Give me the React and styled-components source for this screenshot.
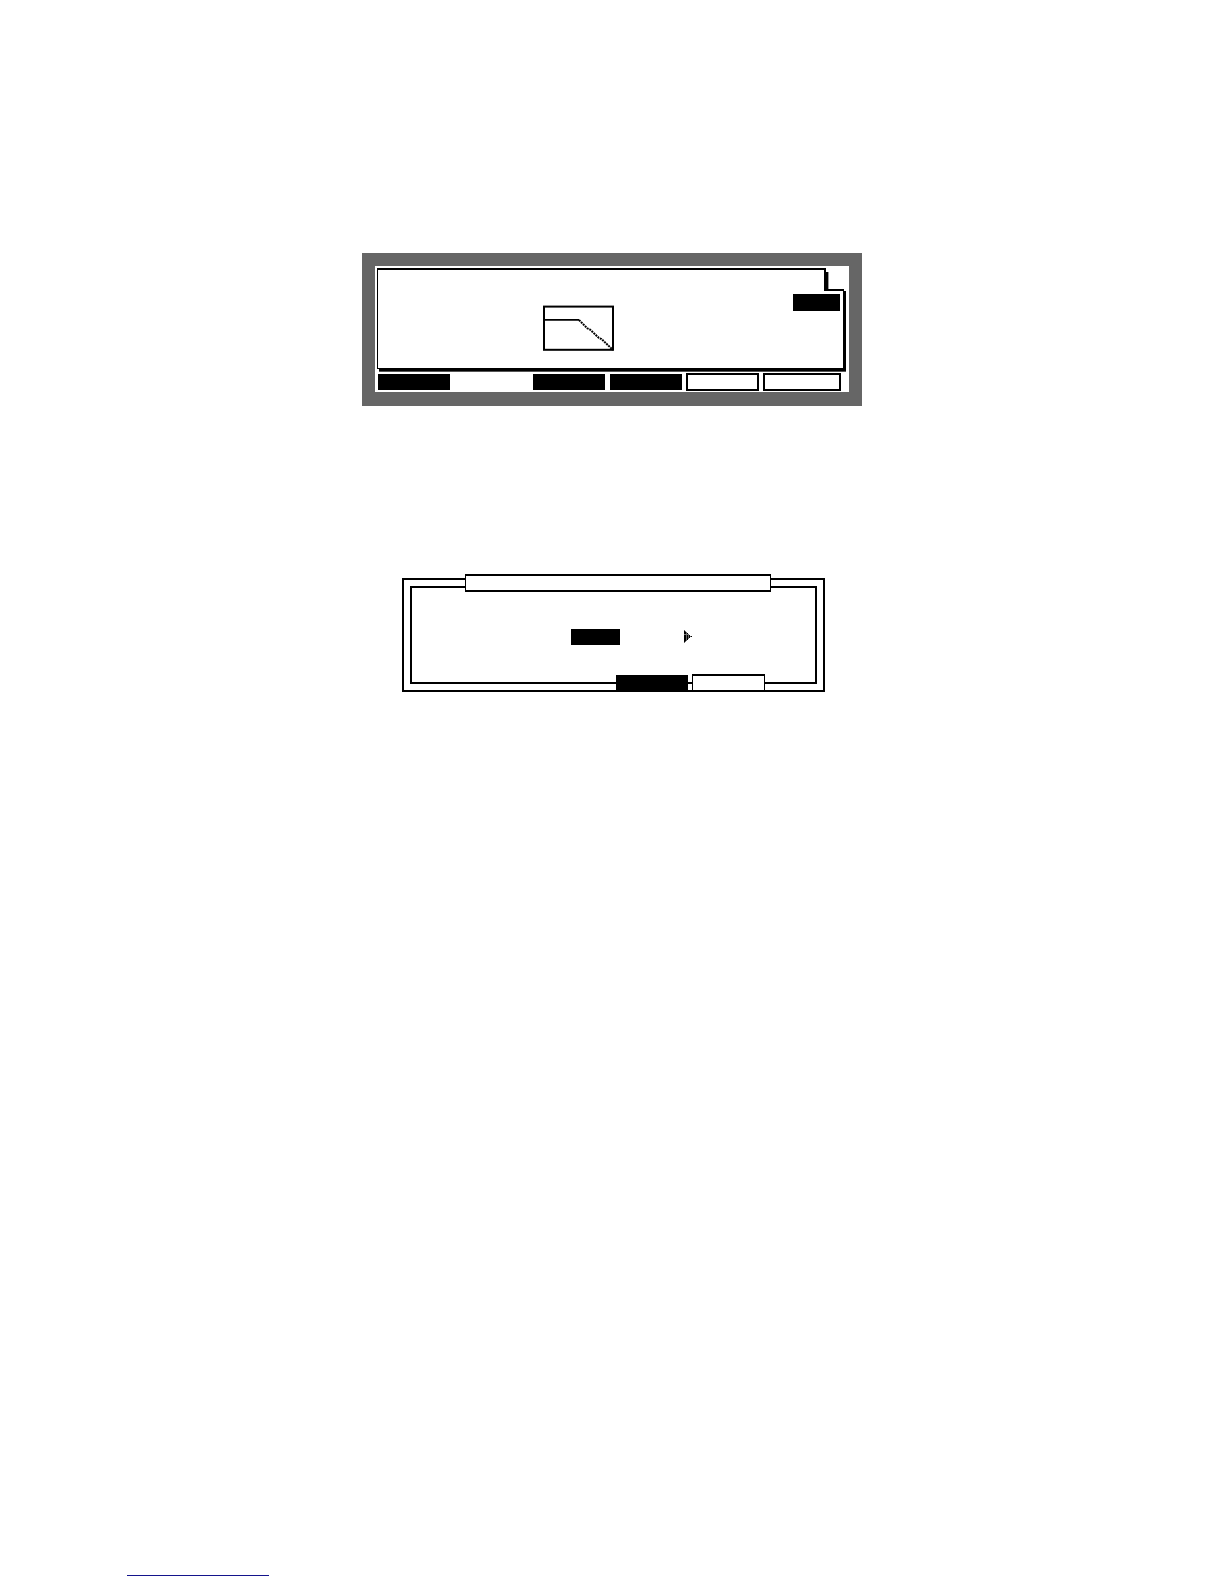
import styled, { createGlobalStyle } from 'styled-components'

const softKeys = [
  { name: 'F1', kind: 'solid' },
  { name: 'F2', kind: 'blank' },
  { name: 'F3', kind: 'solid' },
  { name: 'F4', kind: 'solid' },
  { name: 'F5', kind: 'outline' },
  { name: 'F6', kind: 'outline' },
]

function FilterGraph() {
  return (
    <Graph viewBox="0 0 71 46" role="img" aria-label="Filter curve">
      <rect x="1" y="1.6" width="69" height="43.2" fill="#fff" stroke="#000" strokeWidth="2" />
      <path d="M2 14.8H36" stroke="#000" strokeWidth="1.8" fill="none" />
      <path
        d="M36 15L44.5 23.5L47 24.5L56 33L58.5 34L70 45"
        stroke="#000"
        strokeWidth="2"
        strokeDasharray="2 0.8"
        fill="none"
      />
    </Graph>
  )
}

function NextArrow() {
  return (
    <svg width="8" height="14" viewBox="0 0 8 14" shapeRendering="crispEdges">
      <path d="M0 0H1V1H2V2H3V3H4V4H5V5H6V6H8V7H6V8H5V9H4V10H3V11H2V12H1V13H0Z" fill="#666" />
      <path d="M0 1H1V12H0ZM1 2H2V11H1ZM3 3H4V10H3ZM5 5H6V8H5ZM7 6H8V7H7Z" fill="#000" />
      <path d="M0 4H4V5H0Z" fill="#777" />
    </svg>
  )
}

function App() {
  return (
    <>
      <GlobalStyle />
      <Page>
        <Column>
          <Screen>
            <Lcd>
              <PanelHead />
              <PanelBody>
                <FilterGraph />
                <Field $width={47} $height={17} aria-label="Value" />
              </PanelBody>
              <KeyRow>
                {softKeys.map((key) => (
                  <SoftKey key={key.name} $kind={key.kind} aria-label={key.name} />
                ))}
              </KeyRow>
            </Lcd>
          </Screen>

          <Dialog role="dialog" aria-label="Window">
            <DialogFrame>
              <DialogTitle />
              <DialogRow>
                <Field $width={49} $height={16} aria-label="Setting" />
                <ArrowButton aria-label="Next">
                  <NextArrow />
                </ArrowButton>
              </DialogRow>
              <DialogActions>
                <DialogButton $solid aria-label="Cancel" />
                <DialogButton aria-label="Confirm" />
              </DialogActions>
            </DialogFrame>
          </Dialog>
        </Column>

        <Footer>
          <FooterLink href="#" aria-label="Site" />
        </Footer>
      </Page>
    </>
  )
}

const GlobalStyle = createGlobalStyle`
  * {
    box-sizing: border-box;
  }
  body {
    margin: 0;
    background: #fff;
    font-family: "Liberation Sans", Arial, sans-serif;
  }
  button, input {
    margin: 0;
    padding: 0;
    border: 0;
    border-radius: 0;
    background: none;
    font: inherit;
  }
`

const Page = styled.div`
  display: flex;
  flex-direction: column;
  min-height: 100vh;
  padding: 253px 0 8px;
`

const Column = styled.main`
  display: flex;
  flex-direction: column;
  gap: 172px;
  width: 100%;
  max-width: 500px;
  margin: 0 auto;
`

const Screen = styled.section`
  padding: 13px 13px 14px;
  background: #666;
`

const Lcd = styled.div`
  padding: 2px 5px 1px 2px;
  background: #fff;
`

const PanelHead = styled.div`
  position: relative;
  z-index: 1;
  height: 23px;
  margin: 0 18px -2px 0;
  border: solid #000;
  border-width: 2px 2px 0 1px;
  background: #fff;

  &::after {
    content: '';
    position: absolute;
    top: 2px;
    bottom: 2px;
    left: calc(100% + 2px);
    width: 2px;
    background: #000;
    box-shadow: 1px 0 0 #999;
  }
`

const PanelBody = styled.div`
  display: grid;
  grid-template-columns: 165fr 71px 226fr;
  align-items: start;
  height: 80px;
  padding: 3px 3px 0 0;
  border: solid #000;
  border-width: 2px 1px 1px 1px;
  box-shadow: 2px 2px 0 #000, 2px 3px 0 #555;
`

const Graph = styled.svg`
  grid-column: 2;
  width: 71px;
  height: 46px;
  margin-top: 11px;
`

const Field = styled.input`
  justify-self: end;
  width: ${(props) => props.$width}px;
  height: ${(props) => props.$height}px;
  background: #000;
  color: #fff;
`

const KeyRow = styled.div`
  display: grid;
  grid-template-columns: 72fr 73fr 72fr 72fr 72fr 77fr;
  gap: 5px;
  align-items: center;
  height: 18px;
  margin-top: 4px;
  padding: 0 3px 0 1px;
`

const SoftKey = styled.button`
  height: ${(props) => (props.$kind === 'outline' ? 18 : 16)}px;
  margin-left: ${(props) => (props.$kind === 'outline' ? '-1px' : '0')};
  background: ${(props) => (props.$kind === 'solid' ? '#000' : '#fff')};
  border: ${(props) => (props.$kind === 'outline' ? '2px solid #000' : '0')};
`

const Dialog = styled.section`
  margin: 0 37px 0 40px;
  padding: 6px;
  border: 2px solid #000;
`

const DialogFrame = styled.div`
  display: flex;
  flex-direction: column;
  height: 98px;
  border: 2px solid #000;
`

const DialogTitle = styled.header`
  flex: none;
  height: 18px;
  margin: -14px 44px 0 53px;
  border: solid #000;
  border-width: 2px 1px;
  background: #fff;
`

const DialogRow = styled.div`
  display: flex;
  align-items: center;
  gap: 64px;
  margin: 37px 0 0 159px;
`

const ArrowButton = styled.button`
  display: flex;
`

const DialogActions = styled.div`
  display: flex;
  justify-content: flex-end;
  align-items: flex-end;
  gap: 4px;
  margin: auto 50px -10px 0;
`

const DialogButton = styled.button`
  width: ${(props) => (props.$solid ? 72 : 73)}px;
  height: ${(props) => (props.$solid ? 17 : 18)}px;
  background: ${(props) => (props.$solid ? '#000' : '#fff')};
  border: solid #000;
  border-width: 2px 1px;
`

const Footer = styled.footer`
  margin-top: auto;
  padding-left: 127px;
`

const FooterLink = styled.a`
  display: block;
  width: 142px;
  border-bottom: 1px solid #14148c;
`

export default App
